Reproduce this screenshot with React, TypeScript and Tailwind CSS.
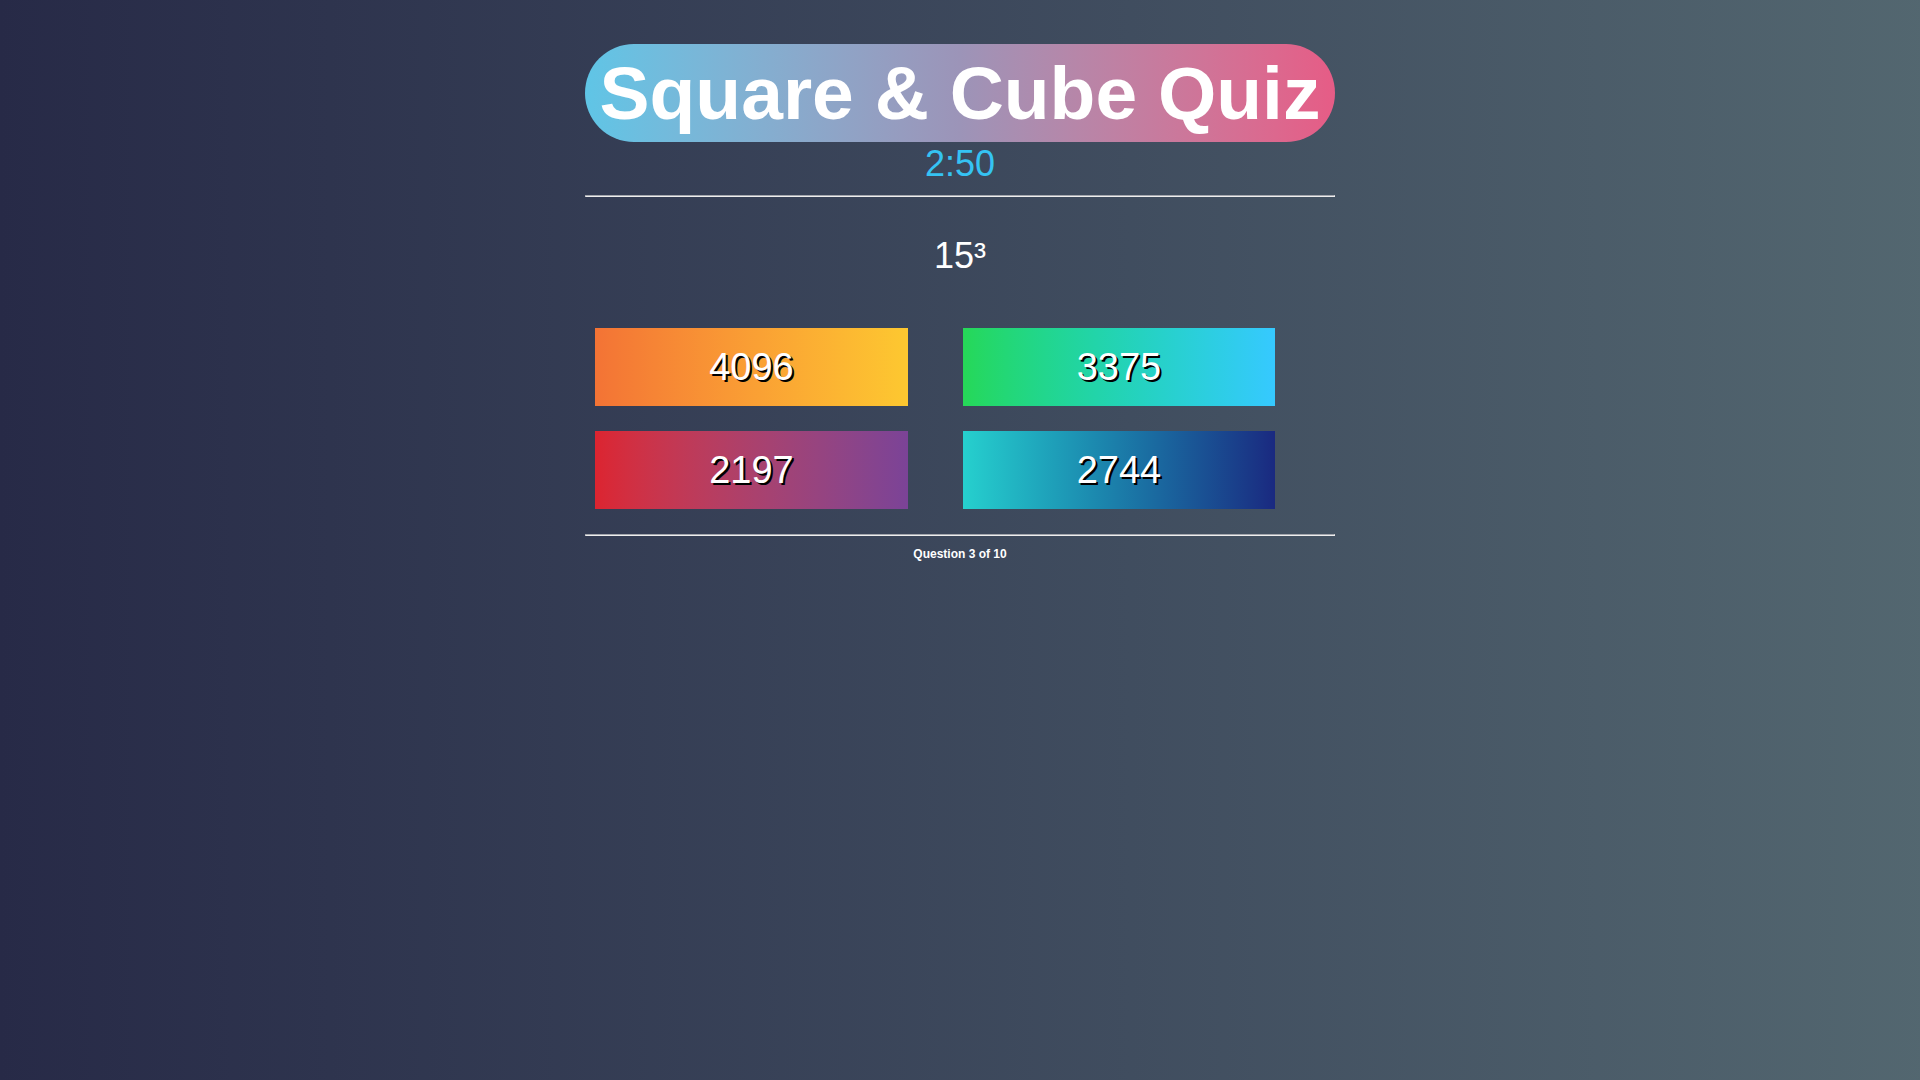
const answers = [
  { value: "4096", bg: "bg-gradient-to-r from-[#f37335] to-[#fdc830]" },
  { value: "3375", bg: "bg-gradient-to-r from-[#26d857] to-[#36c9ff]" },
  { value: "2197", bg: "bg-gradient-to-r from-[#dc2430] to-[#7b4397]" },
  { value: "2744", bg: "bg-gradient-to-r from-[#26d0ce] to-[#1a2980]" },
];

/* ── Old-style inset rule ── */
function Rule({ className = "" }: { className?: string }) {
  return (
    <div
      className={`h-0 border border-t-[#a3a6ad] border-l-[#a3a6ad] border-b-[#eeeeee] border-r-[#eeeeee] ${className}`}
    />
  );
}

export default function App() {
  return (
    <div
      className="min-h-[1620px] w-[1930px] bg-gradient-to-r from-[#272a47] to-[#536770] pr-[10px] pt-[44px] text-white"
      style={{ fontFamily: "'Liberation Sans', Arial, sans-serif" }}
    >
      <div className="mx-auto flex w-[750px] flex-col">
        {/* Title pill */}
        <h1 className="flex h-[98px] items-center justify-center rounded-full bg-gradient-to-r from-[#5fc5e6] via-[#9c94b8] to-[#e65c86] text-[75px] font-bold leading-none text-white">
          Square &amp; Cube Quiz
        </h1>

        {/* Timer */}
        <div className="mt-[1px] text-center text-[36px] leading-[41px] text-[#35c3f3]">
          2:50
        </div>

        <Rule className="mt-[11px]" />

        {/* Question */}
        <div className="mt-[38px] text-center text-[36px] leading-[41px] text-white">
          15³
        </div>

        {/* Answers */}
        <div className="mt-[52px] grid grid-cols-[313px_312px] gap-x-[55px] gap-y-[25px] pl-[10px]">
          {answers.map((a) => (
            <button
              key={a.value}
              className={`flex h-[78px] items-center justify-center text-[38px] text-white [text-shadow:2px_2px_0_#000] ${a.bg}`}
            >
              {a.value}
            </button>
          ))}
        </div>

        <Rule className="mt-[25px]" />

        {/* Progress */}
        <div className="mt-[11px] text-center text-[12px] font-bold leading-[14px] text-white">
          Question 3 of 10
        </div>
      </div>
    </div>
  );
}
